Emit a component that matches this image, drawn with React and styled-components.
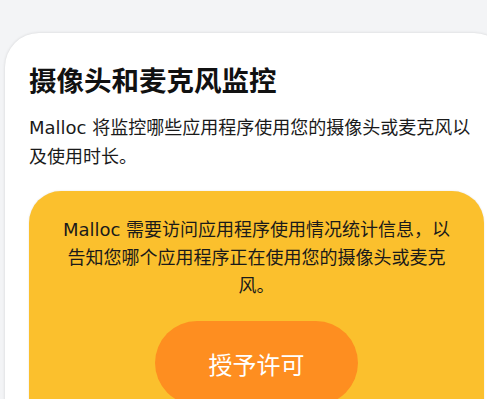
import React from "react";
import styled, { createGlobalStyle } from "styled-components";

const GlobalStyle = createGlobalStyle`
  html, body {
    margin: 0;
    padding: 0;
    background: #f3f4f6;
    overflow: hidden;
  }
  body {
    font-family: "DejaVu Sans", "Noto Sans CJK SC", sans-serif;
    color: #111;
  }
`;

const Page = styled.div`
  width: 487px;
  height: 399px;
  overflow: hidden;
  padding: 33px 0 0 5px;
  box-sizing: border-box;
`;

const Card = styled.section`
  width: 503px;
  min-height: 420px;
  box-sizing: border-box;
  background: #fff;
  border-radius: 34px;
  box-shadow: 0 0 3px rgba(0, 0, 0, 0.14);
  padding: 28px 24px;
`;

const Title = styled.h1`
  margin: 0;
  font-family: "Noto Sans CJK SC", sans-serif;
  font-size: 27.5px;
  font-weight: 700;
  line-height: 36px;
  color: #111;
`;

const Lead = styled.p`
  margin: 16px 0 0;
  font-size: 18px;
  line-height: 29px;
  color: #1a1a1a;
`;

const Notice = styled.div`
  margin-top: 20px;
  background: #fbc02d;
  border-radius: 32px;
  box-shadow: 0 0 2px rgba(0, 0, 0, 0.12);
  padding: 25px 31px 40px;
  display: flex;
  flex-direction: column;
  align-items: center;
`;

const NoticeText = styled.p`
  margin: 0;
  font-size: 18px;
  line-height: 28px;
  text-align: center;
  color: #1a1a1a;
`;

const GrantButton = styled.button`
  margin-top: 21px;
  width: 203px;
  height: 84px;
  border: none;
  border-radius: 42px;
  background: #fe8e20;
  color: #fff;
  font-family: "Noto Sans CJK SC", sans-serif;
  font-size: 24px;
  cursor: pointer;
`;

export default function App() {
  return (
    <>
      <GlobalStyle />
      <Page>
        <Card>
          <Title>摄像头和麦克风监控</Title>
          <Lead>Malloc 将监控哪些应用程序使用您的摄像头或麦克风以及使用时长。</Lead>
          <Notice>
            <NoticeText>
              Malloc 需要访问应用程序使用情况统计信息，以告知您哪个应用程序正在使用您的摄像头或麦克风。
            </NoticeText>
            <GrantButton>授予许可</GrantButton>
          </Notice>
        </Card>
      </Page>
    </>
  );
}
